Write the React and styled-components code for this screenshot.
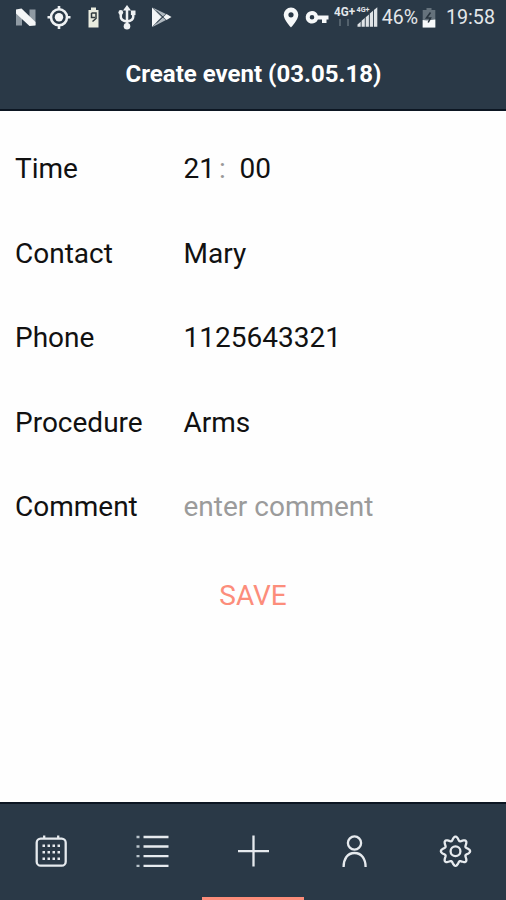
import React from 'react';
import styled, { createGlobalStyle } from 'styled-components';

const navy = '#2a3947';
const coral = '#fc8d7b';
const offWhite = '#e6eaee';

const GlobalStyle = createGlobalStyle`
  * {
    box-sizing: border-box;
  }
  body {
    margin: 0;
    background: #fff;
    font-family: Roboto, 'Liberation Sans', sans-serif;
  }
`;

const Screen = styled.div`
  display: flex;
  flex-direction: column;
  width: 506px;
  height: 900px;
  background: #fefefe;
  overflow: hidden;
`;

const Header = styled.header`
  height: 111px;
  flex: none;
  background: ${navy};
  border-bottom: 2px solid #0c1622;
`;

const StatusBar = styled.div`
  display: flex;
  align-items: center;
  height: 36px;
  padding: 0 11px 0 14px;
`;

const StatusIcon = styled.svg`
  flex: none;
  display: block;
  width: ${({ $width }) => $width}px;
  height: 36px;
  margin-right: ${({ $after }) => $after || 0}px;
`;

const StatusSpacer = styled.div`
  flex: 1;
`;

const StatusText = styled.span`
  font-size: ${({ $size }) => $size}px;
  line-height: 36px;
  color: #e3e7ea;
  margin-right: ${({ $after }) => $after || 0}px;
`;

const Title = styled.h1`
  margin: 0;
  padding: 22px 0 0 1px;
  font-size: 24px;
  line-height: 32px;
  font-weight: 700;
  text-align: center;
  color: #fff;
`;

const Form = styled.main`
  flex: 1;
  padding-top: 16px;
`;

const Row = styled.div`
  display: grid;
  grid-template-columns: 168.5px 1fr;
  align-items: center;
  height: 84.5px;
  padding-left: 15px;
  font-size: 28px;
  line-height: 34px;
  color: #111;
`;

const Value = styled.span`
  color: ${({ $placeholder }) => ($placeholder ? '#9b9b9b' : '#111')};
`;

const TimeValue = styled.div`
  display: flex;
`;

const Colon = styled.span`
  width: 24.500px;
  padding-left: 4px;
  color: #999;
`;

const SaveButton = styled.button`
  display: block;
  margin: 29px auto 0;
  padding: 0;
  border: 0;
  background: none;
  font: 28px/34px Roboto, 'Liberation Sans', sans-serif;
  color: ${coral};
`;

const TabBar = styled.nav`
  display: grid;
  grid-template-columns: repeat(5, 1fr);
  flex: none;
  height: 98px;
  background: ${navy};
  border-top: 2px solid #0c1622;
`;

const Tab = styled.div`
  display: flex;
  justify-content: center;
  padding-top: 29px;
  border-bottom: 3px solid ${({ $active }) => ($active ? coral : 'transparent')};
`;

const TabSvg = styled.svg`
  display: block;
  width: 36px;
  height: 36px;
  fill: none;
  stroke: ${offWhite};
  stroke-width: 2.3;
`;

const NougatIcon = () => (
  <StatusIcon $width={23} $after={10} viewBox="0 0 23 36">
    <path d="M2 10h6v15.500H2zM15.500 9.500h6V25h-6z" fill="#8f9aa3" />
    <path d="M2 9.500l5.500-1 14 13.500v3.500l-6 .500L2 13.500z" fill="#f4f6f7" />
  </StatusIcon>
);

const LocateIcon = () => (
  <StatusIcon $width={24} $after={16} viewBox="0 0 24 36">
    <circle cx="12" cy="17.3" r="8" fill="none" stroke="#eef1f3" strokeWidth="2.600" />
    <circle cx="12" cy="17.3" r="4.2" fill="#f4f6f7" />
    <path d="M12 6v4M12 25v4M.5 17.3h4M19.500 17.300h4" stroke="#eef1f3" strokeWidth="2.600" />
  </StatusIcon>
);

const BatteryAlertIcon = () => (
  <StatusIcon $width={13} $after={18} viewBox="0 0 13 36">
    <path d="M4 7.500h5V10h2.500v17.500H1.500V10H4z" fill="#e9ecdf" />
    <path d="M4.500 13h4.500v5.500L5.500 21.500M4.500 13v4.500h3.500" fill="none" stroke="#303a3e" strokeWidth="1.500" />
  </StatusIcon>
);

const UsbIcon = () => (
  <StatusIcon $width={18} $after={15} viewBox="0 0 18 36">
    <path d="M9 9v18M2.800 13v4q0 3.500 6.200 4.500M15.200 13v4q0 3.500-6.200 4.500" fill="none" stroke="#eef1f3" strokeWidth="2.500" />
    <path d="M9 5l4 5.500H5z" fill="#eef1f3" />
    <circle cx="2.800" cy="12.500" r="2.400" fill="#eef1f3" />
    <path d="M12.900 10.500h4.600v4.600h-4.600z" fill="#eef1f3" />
    <circle cx="9" cy="26.200" r="3.300" fill="#eef1f3" />
  </StatusIcon>
);

const PlayStoreIcon = () => (
  <StatusIcon $width={21} viewBox="0 0 21 36">
    <path d="M1 7.500v19.500L10.500 17z" fill="#f4f6f7" />
    <path d="M1.500 7.500L15 14l-4 3zM1.500 27L15 20l-4-3z" fill="#aeb7be" />
    <path d="M15.500 14l5 3-5 3-3.200-3z" fill="#f4f6f7" />
    <path d="M5.500 11l6.500 6-6.500 6" fill="none" stroke="#34434f" strokeWidth="1" />
  </StatusIcon>
);

const PinIcon = () => (
  <StatusIcon $width={16} $after={6} viewBox="0 0 16 36">
    <path
      d="M8 7.500a7.300 7.300 0 0 0-7.300 7.300C.7 20 8 27.500 8 27.500s7.300-7.500 7.300-12.700A7.300 7.300 0 0 0 8 7.500zm0 4.700a2.600 2.600 0 1 1 0 5.200 2.600 2.600 0 0 1 0-5.200z"
      fill="#f6f8f9"
      fillRule="evenodd"
    />
  </StatusIcon>
);

const KeyIcon = () => (
  <StatusIcon $width={24} $after={5} viewBox="0 0 24 36">
    <path
      d="M7 11a6.300 6.300 0 1 0 5.900 8.500H17V23h4.500v-3.500H23.500v-4H12.900A6.300 6.300 0 0 0 7 11zm0 4a2.300 2.300 0 1 1 0 4.600A2.300 2.300 0 0 1 7 15z"
      fill="#f6f8f9"
      fillRule="evenodd"
    />
  </StatusIcon>
);

const NetworkIcon = () => (
  <StatusIcon $width={45} $after={3} viewBox="0 0 45 36">
    <g fill="#e3e7ea" fontFamily="Roboto" fontWeight="700">
      <text x="0" y="16.300" fontSize="12.500" textLength="21" lengthAdjust="spacingAndGlyphs">4G+</text>
      <text x="22.500" y="12" fontSize="7.500" textLength="13" lengthAdjust="spacingAndGlyphs">4G+</text>
    </g>
    <path d="M6 19v7M14 19v7" stroke="#53616c" strokeWidth="2" />
    <path d="M23.500 26.800v-2.300l3.200-2.800v5.100zM27.600 26.800v-6l3.200-2.700v8.700zM31.700 26.800v-9.500l3.200-2.800v12.300zM35.800 26.800V13.500l3.200-2.700v16zM39.900 26.800V10l3.400-2.800v19.600z" fill="#dfe3e6" />
  </StatusIcon>
);

const BatteryIcon = () => (
  <StatusIcon $width={14} $after={10} viewBox="0 0 14 36">
    <path d="M4.500 8h5v2h3.800v17.500H.7V10h3.800z" fill="#65727c" />
    <path d="M.7 20l4 .5 8.600-1v8H.7z" fill="#f8fafb" />
    <path d="M8.500 12.500L4.500 18h4l-2.300 4.500" fill="none" stroke="#28343f" strokeWidth="1.600" />
  </StatusIcon>
);

const CalendarIcon = () => (
  <TabSvg viewBox="0 0 36 36">
    <rect x="3.700" y="5.700" width="29" height="27" rx="4" />
    <path d="M11.200 2.500v3M25.200 2.500v3" />
    <path d="M9.500 12.800h18M9.500 19.300h18M9.500 25.800h18" strokeWidth="2.500" strokeDasharray="2.500 2.500" />
  </TabSvg>
);

const ListIcon = () => (
  <TabSvg viewBox="0 0 36 36">
    <path d="M9.500 4h25M9.500 13.500h25M9.500 23.200h25M9.500 32.800h25" strokeWidth="2.300" />
    <path d="M2.500 4h3M2.500 13.500h3M2.500 23.200h3M2.500 32.800h3" strokeWidth="2.300" stroke="#b9c4cb" />
  </TabSvg>
);

const PlusIcon = () => (
  <TabSvg viewBox="0 0 36 36">
    <path d="M18.500 2.500v31M3 18.200h31" />
  </TabSvg>
);

const PersonIcon = () => (
  <TabSvg viewBox="0 0 36 36">
    <circle cx="18.500" cy="10" r="6.600" />
    <path d="M7.600 34c0-8 3.700-14 10.900-14s11.100 6 11.100 14" />
  </TabSvg>
);

// eight rounded teeth around the centre
const gearPoints = Array.from({ length: 160 }, (_, i) => {
  const angle = (i / 160) * Math.PI * 2;
  const radius = 12.7 + 1.9 * Math.cos(angle * 8);
  return `${(18.5 + radius * Math.cos(angle)).toFixed(2)},${(18.2 + radius * Math.sin(angle)).toFixed(2)}`;
}).join(' ');

const GearIcon = () => (
  <TabSvg viewBox="0 0 36 36">
    <polygon points={gearPoints} strokeLinejoin="round" />
    <circle cx="18.500" cy="18.200" r="4.900" />
  </TabSvg>
);

const fields = [
  { label: 'Contact', value: 'Mary' },
  { label: 'Phone', value: '1125643321' },
  { label: 'Procedure', value: 'Arms' },
  { label: 'Comment', value: 'enter comment', placeholder: true }
];

const tabs = [
  { name: 'calendar', Icon: CalendarIcon },
  { name: 'list', Icon: ListIcon },
  { name: 'create', Icon: PlusIcon },
  { name: 'contacts', Icon: PersonIcon },
  { name: 'settings', Icon: GearIcon }
];

const App = () => (
  <Screen>
    <GlobalStyle />
    <Header>
      <StatusBar>
        <NougatIcon />
        <LocateIcon />
        <BatteryAlertIcon />
        <UsbIcon />
        <PlayStoreIcon />
        <StatusSpacer />
        <PinIcon />
        <KeyIcon />
        <NetworkIcon />
        <StatusText $size={19.5} $after={4}>46%</StatusText>
        <BatteryIcon />
        <StatusText $size={19.7}>19:58</StatusText>
      </StatusBar>
      <Title>Create event (03.05.18)</Title>
    </Header>
    <Form>
      <Row>
        <span>Time</span>
        <TimeValue>
          <Value>21</Value>
          <Colon>:</Colon>
          <Value>00</Value>
        </TimeValue>
      </Row>
      {fields.map(({ label, value, placeholder }) => (
        <Row key={label}>
          <span>{label}</span>
          <Value $placeholder={placeholder}>{value}</Value>
        </Row>
      ))}
      <SaveButton>SAVE</SaveButton>
    </Form>
    <TabBar>
      {tabs.map(({ name, Icon }) => (
        <Tab key={name} $active={name === 'create'}>
          <Icon />
        </Tab>
      ))}
    </TabBar>
  </Screen>
);

export default App;
